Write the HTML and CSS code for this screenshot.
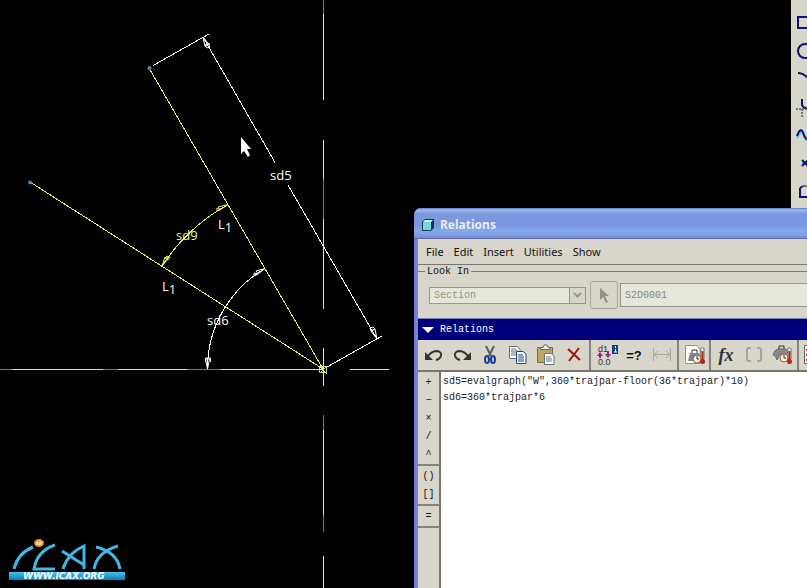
FILE: index.html
```html
<!DOCTYPE html>
<html lang="en">
<head>
<meta charset="utf-8">
<title>Relations</title>
<link rel="stylesheet" href="styles.css">
</head>
<body>
<main class="workspace">
  <svg class="sketch" width="415" height="588" role="img" aria-label="Sketch with dimensions">
    <g class="axis">
      <path d="M323.5 0V100M323.5 140V309M323.5 348V386M323.5 415V532M323.5 556V588"/>
      <path d="M0 369.5H323M350 369.5H389"/>
      <path class="hot" d="M323.5 0V14M323.5 179V219M323.5 415V430M323.5 515V532M0 369.5H12M103 369.5H118M187 369.5H221"/>
    </g>
    <g class="line">
      <path d="M149 68L323 369M30 182L323 369"/>
      <path d="M228 204.500A190 190 0 0 0 162 266"/>
    </g>
    <g class="dim">
      <path d="M153 65.500L209 34M327 367L382 336"/>
      <path d="M203 37L275 162.500M288 185L377 339"/>
      <path d="M265 268.500A116 116 0 0 0 207.500 369"/>
    </g>
    <g class="arrow">
      <path d="M203 37L209 44.500L205 46.500ZM205 45L209 43L209.500 47L207 48Z"/>
      <path d="M377 339L371 331L375 329ZM371 331L370 328L373 327L375 329Z"/>
      <path d="M265 268.500L258 274L256 271ZM258 274L254 276L254 273Z"/>
      <path d="M207.500 369L205.500 359H209.500ZM205.500 362V358H210.500V362"/>
    </g>
    <g class="arrow yellow">
      <path d="M228 204.500L220 210L218 207ZM220 210L217 211L217 208Z"/>
      <path d="M162 266L165 257L168 259ZM165 258L167 256L170 257L168 260Z"/>
    </g>
    <circle class="node" cx="149.500" cy="68" r="2"/>
    <circle class="node" cx="30" cy="182.500" r="2"/>
    <path class="origin" d="M319.500 366.500H326.500V372.500H319.500ZM321 368L327 374M326 367L320 373"/>
    <text x="270" y="180">sd5</text>
    <text x="207" y="325">sd6</text>
    <text class="pale" x="176" y="240">sd9</text>
    <text x="218" y="229">L<tspan dy="3">1</tspan></text>
    <text x="162" y="291">L<tspan dy="3">1</tspan></text>
    <path class="cursor" d="M241 137V154L244 151L248 157L250 155L247 149H251Z"/>
  </svg>

  <svg class="logo" width="120" height="46" viewBox="0 0 120 46" role="img" aria-label="ICAX">
    <defs>
      <linearGradient id="bar" x2="0" y2="1"><stop offset="0" stop-color="#48c3ef"/><stop offset="1" stop-color="#087eb5"/></linearGradient>
      <radialGradient id="sun"><stop offset="0" stop-color="#ffd39a"/><stop offset="1" stop-color="#e87917"/></radialGradient>
    </defs>
    <g class="logo-mark">
      <path d="M6 33Q10 17 25 11M47 9Q29 15 26 33H47M55 33Q60 17 76 10V33M54 15L76 29M86 33Q89 16 110 10M88 11Q109 16 112 33"/>
    </g>
    <ellipse cx="31" cy="7" rx="5" ry="4" fill="url(#sun)"/>
    <path d="M29 9V6M31 9L33 6V9" stroke="#fff1d7" fill="none"/>
    <rect x="1" y="36" width="116" height="8" fill="url(#bar)"/>
    <text x="15" y="43">WWW.ICAX.ORG</text>
  </svg>

  <aside class="tools" aria-label="Sketch tools">
    <button aria-label="Rectangle"><svg viewBox="0 0 28 28"><path d="M7 9H22V20H7Z"/></svg></button>
    <button aria-label="Circle"><svg viewBox="0 0 28 28"><circle cx="14" cy="15" r="7"/></svg></button>
    <button aria-label="Arc"><svg viewBox="0 0 28 28"><path d="M7 9Q12 9 17 14"/></svg></button>
    <button aria-label="Fillet"><svg viewBox="0 0 28 28"><path d="M11 7V13Q12 16 17 17"/><path class="dots" d="M5 17H13M11 17V25"/></svg></button>
    <button aria-label="Spline"><svg viewBox="0 0 28 28"><path class="sky" d="M6 18L10 11L15 20L18 21"/><path d="M6 16Q10 5 13 15Q14 19 18 20"/></svg></button>
    <button aria-label="Point"><svg viewBox="0 0 28 28"><path class="sky" d="M11 15H18"/><path d="M11 12L17 18M11 18L17 12"/></svg></button>
    <button aria-label="Use edge"><svg viewBox="0 0 28 28"><path class="olive" d="M12 10H22"/><path d="M9 12V21H20V12M9 12L12 10"/></svg></button>
  </aside>

  <section class="window" aria-labelledby="window-title">
    <header class="titlebar">
      <svg width="14" height="14" viewBox="0 0 14 14"><path d="M1 4L4 1H13V10L10 13H1Z" fill="#1c3443"/><path d="M2 4H10V12H2Z" fill="#6fdedb"/><path d="M4 2H12L10 4H2Z" fill="#c5fffb"/></svg>
      <h1 id="window-title">Relations</h1>
    </header>
    <nav class="menu">
      <button>File</button><button>Edit</button><button>Insert</button><button>Utilities</button><button>Show</button>
    </nav>
    <div class="context">
      <fieldset class="lookin">
        <legend>Look In</legend>
        <div class="lookrow">
          <div class="picker">
            <select aria-label="Object type" disabled><option>Section</option></select>
            <svg width="15" height="15" viewBox="0 0 15 15"><path d="M4 5L7.500 8.500L11 5" fill="none" stroke="#99998c" stroke-width="2"/></svg>
          </div>
          <button class="pick" aria-label="Select object" disabled><svg width="12" height="17" viewBox="0 0 12 17"><path d="M2 1V13L5 10L8 16L10 15L7 9H11Z" fill="#929287"/></svg></button>
          <input class="name" aria-label="Object name" value="S2D0001" disabled>
        </div>
      </fieldset>
    </div>
    <h2 class="band"><svg width="12" height="6" viewBox="0 0 12 6"><path d="M0 0H12L6 6Z" fill="#fff"/></svg>Relations</h2>
    <div class="toolbar">
      <div class="group">
        <button aria-label="Undo"><svg viewBox="0 0 28 28"><path class="ink thick" d="M8 15Q12 10 17 10Q22 11 21 15Q20 18 16 19"/><path class="solid" d="M5 11V19H13Z"/></svg></button>
        <button aria-label="Redo"><svg viewBox="0 0 28 28"><path class="ink thick" d="M20 15Q16 10 11 10Q6 11 7 15Q8 18 12 19"/><path class="solid" d="M23 11V19H15Z"/></svg></button>
        <button aria-label="Cut"><svg viewBox="0 0 28 28"><path d="M10 5L15 15M18 5L13 15" stroke="#55616b" stroke-width="2" fill="none"/><g class="blue"><ellipse cx="11" cy="18.500" rx="2" ry="3.500"/><ellipse cx="17" cy="18.500" rx="2" ry="3.500"/></g></svg></button>
        <button aria-label="Copy"><svg viewBox="0 0 28 28"><g class="sheet"><path d="M5.500 5.500H13L16 8V17.500H5.500Z"/><path d="M7 8H12M7 10H14M7 12H14M7 14H14"/></g><g class="sheet navy"><path d="M12.500 10.500H19L22 13V22.500H12.500Z"/><path d="M14 14H19M14 16H20M14 18H20M14 20H20"/></g></svg></button>
        <button aria-label="Paste"><svg viewBox="0 0 28 28"><path d="M5.500 6.500H20.500V21.500H5.500Z" fill="#bda668" stroke="#776b49"/><path d="M8.500 8.500V6.500H11L12 4H15L16 6.500H18V8.500Z" fill="#eee" stroke="#666"/><g class="sheet"><path d="M12.500 12.500H19L22 15V23.500H12.500Z"/><path d="M14 16H19M14 18H20M14 20H20"/></g></svg></button>
        <button aria-label="Delete"><svg viewBox="0 0 28 28"><path d="M8 8L20 19M19 7L9 20" fill="none" stroke="#99120e" stroke-width="2"/></svg></button>
      </div>
      <div class="group">
        <button aria-label="Toggle dimension names"><svg viewBox="0 0 28 28"><text class="tiny" x="6" y="11">d1</text><text class="tiny" x="6" y="24">0.0</text><path d="M8 17V13M16 10V14" stroke="#94228c" stroke-width="2"/><path d="M5 15L8 11L11 15ZM13 13L16 17L19 13Z" fill="#94228c"/><rect x="20" y="4" width="6" height="9" fill="#143c88"/><path d="M23.500 5V7M23.500 8V11M22 11H25" stroke="#fff" fill="none"/></svg></button>
        <button class="verify" aria-label="Evaluate">=?</button>
        <button aria-label="Measure" disabled><svg viewBox="0 0 28 28"><path d="M5.500 7V20M22.500 7V20M6 13.500H22M10 10L6 13.500L10 17M18 10L22 13.500L18 17" fill="none" stroke="#aaa99f"/></svg></button>
      </div>
      <div class="group">
        <button aria-label="Units sheet"><svg viewBox="0 0 28 28"><path d="M5.500 4.500H17L20 8V22.500H5.500Z" fill="#fff" stroke="#909090"/><path d="M8 20L10 12H19L22 20Z" fill="#84878a"/><path d="M12 12V9H17V12" fill="none" stroke="#333"/><circle cx="17" cy="18" r="4" fill="#f7efdb" stroke="#8b6549"/><path d="M17 15V18H19" fill="none" stroke="#333"/><path d="M21 7H24V18H21Z" fill="#fff" stroke="#777"/><path d="M22.500 10V20" stroke="#b6231d" stroke-width="2"/><circle cx="22.500" cy="20.500" r="2.500" fill="#b6231d"/></svg></button>
      </div>
      <div class="group">
        <button class="fx" aria-label="Insert function">fx</button>
        <button aria-label="Parameter" disabled><svg viewBox="0 0 28 28"><path d="M11 7H9Q7 7 7 9V18Q7 20 9 20H11M17 7H19Q21 7 21 9V18Q21 20 19 20H17" fill="none" stroke="#a5a59b" stroke-width="2"/></svg></button>
        <button aria-label="Units"><svg viewBox="0 0 28 28"><path d="M5 14Q6 9 10 8H18L20 12L18 14L12 13L9 19Q8 14 5 14Z" fill="#85898c" stroke="#6b6e70"/><path d="M11 8V5H16V8" fill="none" stroke="#333"/><circle cx="16" cy="17" r="4" fill="#f7efdb" stroke="#8b6549"/><path d="M16 14V17H18" fill="none" stroke="#333"/><path d="M20 7H23V18H20Z" fill="#fff" stroke="#777"/><path d="M21.500 10V20" stroke="#b6231d" stroke-width="2"/><circle cx="21.500" cy="20.500" r="2.500" fill="#b6231d"/></svg></button>
      </div>
      <div class="group">
        <button aria-label="Parameter list"><svg viewBox="0 0 28 28"><path d="M4.500 4.500H22V22.500H4.500Z" fill="#fff" stroke="#606070"/><path d="M6 9H12M6 14H12M6 19H12" stroke="#c22121" stroke-width="2"/></svg></button>
      </div>
    </div>
    <div class="editor">
      <div class="operators">
        <div class="ops"><button>+</button><button>−</button><button>×</button><button>/</button><button>^</button></div>
        <div class="ops"><button>()</button><button>[]</button></div>
        <div class="ops"><button>=</button></div>
      </div>
      <textarea aria-label="Relations" spellcheck="false" wrap="off">sd5=evalgraph("W",360*trajpar-floor(36*trajpar)*10)
sd6=360*trajpar*6</textarea>
    </div>
  </section>
</main>
</body>
</html>
```
FILE: styles.css
```css
* { box-sizing: border-box; }

body {
  margin: 0;
  background: #000;
  font-family: "Liberation Mono", monospace;
  font-size: 10px;
  color: #111;
}

button {
  margin: 0;
  padding: 0;
  border: 0;
  background: none;
  font: inherit;
  color: inherit;
}

.workspace {
  position: relative;
  min-height: 100vh;
  overflow: hidden;
}

/* sketch canvas */
.sketch { display: block; }
.sketch path { fill: none; stroke-width: 1; }
.sketch text { font: 13px "Open Sans", sans-serif; fill: #fff; }
.sketch .pale { fill: #f4f47c; }
.sketch .axis path { stroke: #f2e68c; shape-rendering: crispEdges; }
.sketch .axis .hot { stroke: #d8503c; }
.sketch .line path { stroke: #f4f06c; shape-rendering: crispEdges; }
.sketch .dim path { stroke: #fff; shape-rendering: crispEdges; }
.sketch .arrow path { stroke: #fff; }
.sketch .yellow path { stroke: #f4f06c; }
.sketch .origin { stroke: #cce486; }
.sketch .cursor { fill: #fff; }
.node { fill: #4d86b8; }

.logo { position: absolute; left: 8px; top: 536px; }
.logo-mark path { fill: none; stroke: #42b6e4; stroke-width: 3; }
.logo text { font: italic bold 9px "DejaVu Sans", sans-serif; fill: #fff; }

/* sketch tools */
.tools {
  position: absolute;
  top: 0;
  right: 0;
  display: flex;
  flex-direction: column;
  width: 16px;
  height: 208px;
  padding-top: 8px;
  overflow: hidden;
  background: #d8d5ca;
}
.tools button { flex: none; width: 28px; height: 28px; }
.tools svg { display: block; }
.tools path, .tools circle { fill: none; stroke: #101070; stroke-width: 2; }
.tools .sky { stroke: #57c8ec; }
.tools .olive { stroke: #77765a; }
.tools .dots { stroke: #77776f; stroke-dasharray: 2 1; }

/* relations window */
.window {
  position: absolute;
  top: 208px;
  right: 0;
  bottom: 0;
  left: 414px;
  display: flex;
  flex-direction: column;
  padding-left: 4px;
  border-radius: 7px 0 0 0;
  overflow: hidden;
  background: linear-gradient(to right, #5c65bd 0, #8389d9 2px, #7379c9 4px);
}
.titlebar {
  display: flex;
  align-items: center;
  gap: 5px;
  height: 31px;
  margin-left: -4px;
  padding: 3px 0 0 7px;
  border-bottom: 1px solid #626da9;
  background: linear-gradient(#5d78c4 0, #a0b9f0 2px, #7c98df 6px, #7b96de 17px, #84a9ec 23px, #7d9de4 27px, #7d84c9 30px);
}
.titlebar h1 {
  margin: 0;
  font: bold 12px/18px "Noto Sans", sans-serif;
  color: #e8edfb;
}
.menu {
  display: flex;
  gap: 10px;
  height: 26px;
  padding-left: 8px;
  border-bottom: 1px solid #77766f;
  background: #d8d5ca;
  font: 11px/16px "Noto Sans", sans-serif;
}
.context { height: 53px; background: #d8d5ca; }
.lookin {
  min-width: 0;
  margin: 0;
  padding: 0;
  border: 0;
  border-top: 1px solid #77766f;
}
.lookin legend {
  margin-left: 7px;
  padding: 0 2px;
  line-height: 13px;
}
.lookrow {
  display: flex;
  align-items: center;
  height: 34px;
  padding-left: 11px;
}
.picker {
  display: flex;
  width: 157px;
  height: 17px;
  border: 1px solid #96988d;
  background: #e5e7dc;
}
.picker select {
  flex: 1;
  padding: 0 4px;
  border: 0;
  border-right: 1px solid #96988d;
  appearance: none;
  background: none;
  font: inherit;
  color: #929489;
  opacity: 1;
}
.picker svg { background: #d8d5ca; }
.pick {
  display: grid;
  place-items: center;
  width: 28px;
  height: 28px;
  margin: 0 2px 0 4px;
  border: 1px solid #aaa99b;
  border-radius: 3px;
}
.name {
  flex: 1;
  min-width: 0;
  height: 24px;
  padding: 0 4px;
  border: 1px solid #96988d;
  border-right: 0;
  background: #e5e7dc;
  font: inherit;
  color: #85877e;
}
.band {
  display: flex;
  align-items: center;
  gap: 6px;
  height: 22px;
  margin: 0;
  padding-left: 4px;
  border-top: 1px solid #7780ae;
  background: #00007c;
  font-size: 10px;
  font-weight: normal;
  color: #fff;
}
.toolbar {
  display: flex;
  height: 32px;
  padding-left: 1px;
  overflow: hidden;
  border-bottom: 2px solid #77766f;
  background: #d8d5ca;
}
.group {
  display: flex;
  flex: none;
  padding: 0 1px;
  border-right: 2px solid #85847c;
}
.toolbar button { width: 28px; height: 30px; }
.toolbar svg { display: block; width: 28px; height: 28px; }
.ink { fill: none; stroke: #333; }
.thick { stroke-width: 2; }
.solid { fill: #333; }
.blue ellipse { fill: none; stroke: #193f9a; stroke-width: 2; }
.sheet path { fill: #fff; stroke: #68727b; }
.navy path { stroke: #1f4780; }
.tiny { font: 9px "Liberation Sans", sans-serif; fill: #333; }
.toolbar .verify { font: bold 13px "Liberation Sans", sans-serif; }
.toolbar .fx { font: italic bold 18px "Liberation Serif", serif; color: #333; }

.editor {
  display: flex;
  flex: 1;
  min-height: 0;
}
.operators { width: 23px; border-right: 2px solid #77766f; background: #d8d5ca; }
.ops {
  display: flex;
  flex-direction: column;
  padding: 1px 0;
  border-bottom: 2px solid #85847c;
}
.ops button { height: 18px; }
.editor textarea {
  flex: 1;
  min-width: 0;
  padding: 2px;
  border: 0;
  outline: 0;
  resize: none;
  overflow: hidden;
  background: #fff;
  font: 10px/16px "Liberation Mono", monospace;
  color: #222;
}
```
